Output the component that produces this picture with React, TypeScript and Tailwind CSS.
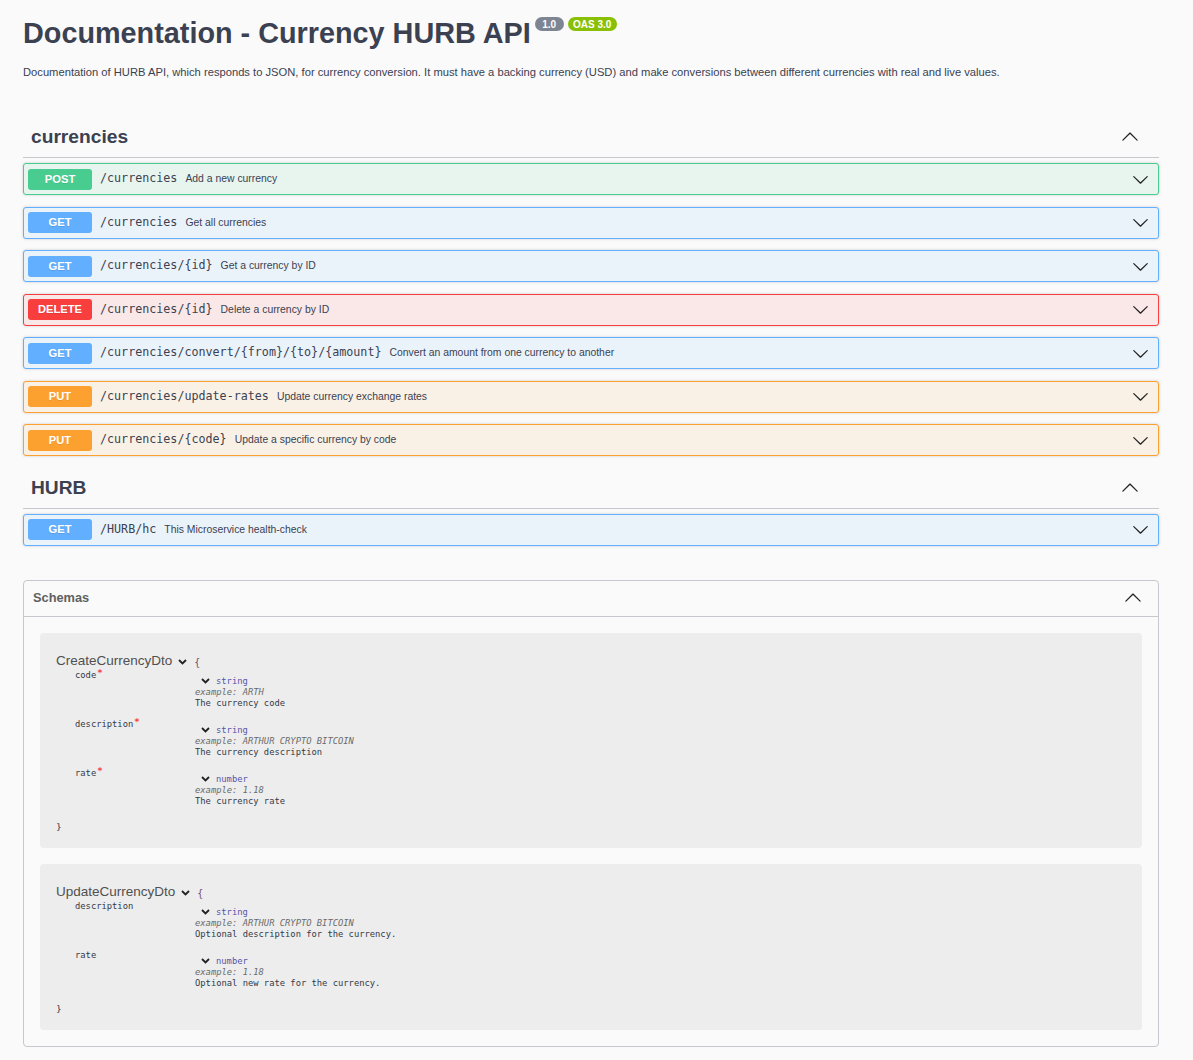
import React from "react";

const SANS = "font-['Liberation_Sans',Arial,sans-serif]";
const MONO = "font-['DejaVu_Sans_Mono',monospace]";

type Method = "GET" | "POST" | "PUT" | "DELETE";

const STYLE: Record<Method, { box: string; badge: string }> = {
  GET: { box: "border-[#61affe] bg-[#ebf3fa]", badge: "bg-[#61affe]" },
  POST: { box: "border-[#49cc90] bg-[#e8f5ef]", badge: "bg-[#49cc90]" },
  PUT: { box: "border-[#fca130] bg-[#faf1e6]", badge: "bg-[#fca130]" },
  DELETE: { box: "border-[#f93e3e] bg-[#fae7e7]", badge: "bg-[#f93e3e]" },
};

const CURRENCIES: { method: Method; path: string; desc: string }[] = [
  { method: "POST", path: "/currencies", desc: "Add a new currency" },
  { method: "GET", path: "/currencies", desc: "Get all currencies" },
  { method: "GET", path: "/currencies/{id}", desc: "Get a currency by ID" },
  { method: "DELETE", path: "/currencies/{id}", desc: "Delete a currency by ID" },
  { method: "GET", path: "/currencies/convert/{from}/{to}/{amount}", desc: "Convert an amount from one currency to another" },
  { method: "PUT", path: "/currencies/update-rates", desc: "Update currency exchange rates" },
  { method: "PUT", path: "/currencies/{code}", desc: "Update a specific currency by code" },
];

const HURB: { method: Method; path: string; desc: string }[] = [
  { method: "GET", path: "/HURB/hc", desc: "This Microservice health-check" },
];

type Prop = { name: string; required: boolean; type: string; example: string; desc: string };

const SCHEMAS: { title: string; props: Prop[] }[] = [
  {
    title: "CreateCurrencyDto",
    props: [
      { name: "code", required: true, type: "string", example: "ARTH", desc: "The currency code" },
      { name: "description", required: true, type: "string", example: "ARTHUR CRYPTO BITCOIN", desc: "The currency description" },
      { name: "rate", required: true, type: "number", example: "1.18", desc: "The currency rate" },
    ],
  },
  {
    title: "UpdateCurrencyDto",
    props: [
      { name: "description", required: false, type: "string", example: "ARTHUR CRYPTO BITCOIN", desc: "Optional description for the currency." },
      { name: "rate", required: false, type: "number", example: "1.18", desc: "Optional new rate for the currency." },
    ],
  },
];

function Arrow({ size, up = false }: { size: number; up?: boolean }) {
  return (
    <svg width={size} height={size} viewBox="0 0 20 20" className={up ? "rotate-180 shrink-0" : "shrink-0"}>
      <path
        fill="#222"
        d="M17.418 6.109c.272-.268.709-.268.979 0s.271.701 0 .969l-7.908 7.83c-.27.268-.707.268-.979 0l-7.908-7.83c-.27-.268-.27-.701 0-.969.271-.268.709-.268.979 0L10 13.25l7.418-7.141z"
      />
    </svg>
  );
}

function SmallChevron() {
  return (
    <svg width="9" height="6" viewBox="0 0 9 6" className="shrink-0">
      <path d="M1 1l3.5 3.5L8 1" fill="none" stroke="#222" strokeWidth="1.8" />
    </svg>
  );
}

function TagHeader({ name }: { name: string }) {
  return (
    <div className="flex items-center justify-between pl-[8px] pr-[20px] py-[8px] border-b border-[#c6c8cd] mb-[5px]">
      <h3 className={`${SANS} text-[19.2px] leading-[24px] font-bold text-[#3b4151]`}>{name}</h3>
      <Arrow size={18} up />
    </div>
  );
}

function OpBlock({ method, path, desc }: { method: Method; path: string; desc: string }) {
  const s = STYLE[method];
  return (
    <div className={`flex items-center h-[32px] mb-[11.5px] rounded-[3px] border pl-[4px] pr-[9px] shadow-[0_0_3px_rgba(0,0,0,0.19)] ${s.box}`}>
      <span className={`${SANS} ${s.badge} w-[64px] h-[21px] rounded-[3px] flex items-center justify-center text-white font-bold text-[11.2px] [text-shadow:0_1px_0_rgba(0,0,0,0.1)]`}>
        {method}
      </span>
      <span className={`${MONO} ml-[8px] text-[11.7px] text-[#3b4151]`}>{path}</span>
      <span className={`${SANS} ml-[8px] text-[10.4px] text-[#3b4151] flex-1`}>{desc}</span>
      <Arrow size={17} />
    </div>
  );
}

function Model({ title, props }: { title: string; props: Prop[] }) {
  return (
    <div className="rounded-[4px] bg-[#ededed] pl-[16px] pt-[20px] pb-[16px]">
      <div className="flex items-center h-[17px]">
        <span className={`${SANS} text-[13.5px] text-[#505050]`}>{title}</span>
        <span className="ml-[6px] mt-[2px]"><SmallChevron /></span>
        <span className={`${MONO} ml-[7px] mt-[2px] text-[10px] text-[#7a4f6e]`}>{"{"}</span>
      </div>
      <div className={`${MONO} text-[8.8px] leading-[11px] text-[#333a48]`}>
        {props.map((p) => (
          <div key={p.name} className="flex pb-[10px]">
            <div className="ml-[19px] w-[120px] shrink-0">
              {p.name}
              {p.required && <span className="text-[#f93e3e] relative -top-[2px] ml-[1px] text-[9px] font-bold">*</span>}
            </div>
            <div className="pt-[6px]">
              <div className="flex items-center">
                <span className="ml-[6px]"><SmallChevron /></span>
                <span className="ml-[6px] text-[#55a]">{p.type}</span>
              </div>
              <div className="italic text-[#6b6b6b]">example: {p.example}</div>
              <div>{p.desc}</div>
            </div>
          </div>
        ))}
        <div className="mt-[4px] text-[9.5px]">{"}"}</div>
      </div>
    </div>
  );
}

export default function App() {
  return (
    <div className="min-h-[1060px] bg-[#fafafa]">
      <div className="ml-[23px] w-[1136px] pt-[15px] pb-[14px]">
        {/* Info */}
        <div className="flex items-start">
          <h2 className={`${SANS} text-[28.8px] leading-[36px] font-bold text-[#3b4151]`}>
            Documentation - Currency HURB API
          </h2>
          <span className={`${SANS} ml-[4px] mt-[2px] w-[29px] h-[14px] rounded-full bg-[#7d8492] text-white font-bold text-[10px] flex items-center justify-center`}>
            1.0
          </span>
          <span className={`${SANS} ml-[4px] mt-[2px] w-[49px] h-[14px] rounded-full bg-[#89bf04] text-white font-bold text-[10px] flex items-center justify-center`}>
            OAS 3.0
          </span>
        </div>
        <p className={`${SANS} mt-[14px] text-[11.2px] leading-[14px] text-[#3b4151]`}>
          Documentation of HURB API, which responds to JSON, for currency conversion. It must have a backing currency (USD) and make conversions between different currencies with real and live values.
        </p>

        {/* Operations */}
        <div className="mt-[38px]">
          <TagHeader name="currencies" />
          {CURRENCIES.map((o, i) => (
            <OpBlock key={i} {...o} />
          ))}
          <TagHeader name="HURB" />
          {HURB.map((o, i) => (
            <OpBlock key={i} {...o} />
          ))}
        </div>

        {/* Schemas */}
        <div className="mt-[34px] rounded-[4px] border border-[#c6c8cd]">
          <div className="flex items-center justify-between h-[36px] pl-[9px] pr-[16px] border-b border-[#c6c8cd]">
            <h4 className={`${SANS} text-[12.8px] font-bold text-[#606060]`}>Schemas</h4>
            <Arrow size={18} up />
          </div>
          <div className="p-[16px] flex flex-col gap-[16px]">
            {SCHEMAS.map((s) => (
              <Model key={s.title} {...s} />
            ))}
          </div>
        </div>
      </div>
    </div>
  );
}
